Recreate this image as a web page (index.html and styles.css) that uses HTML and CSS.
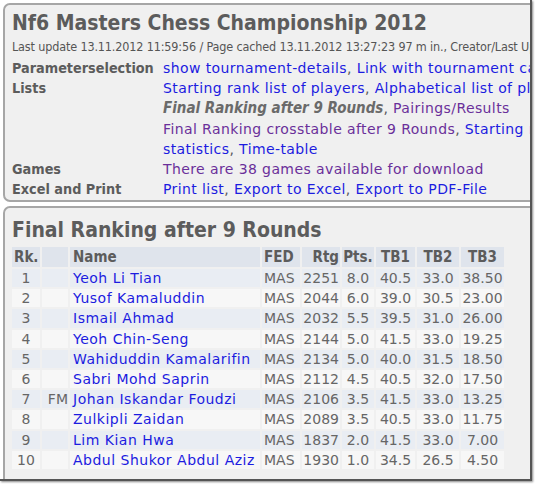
FILE: index.html
```html
<!DOCTYPE html>
<html>
<head>
<meta charset="utf-8">
<link rel="stylesheet" href="styles.css">
</head>
<body>
<div class="frame">
  <div class="panel panel-top">
    <h1 class="title">Nf6 Masters Chess Championship 2012</h1>
    <div class="update">Last update 13.11.2012 11:59:56 / Page cached 13.11.2012 13:27:23 97 m in., Creator/Last Upload: Malaysian Chess Federation</div>
    <div class="info">
      <div class="label">Parameterselection</div>
      <div class="links"><a class="lk">show tournament-details</a>, <a class="lk">Link with tournament calendar</a></div>
      <div class="label">Lists</div>
      <div class="links">
        <div class="line"><a class="lk">Starting rank list of players</a>, <a class="lk">Alphabetical list of players</a>, <a class="lk">Federation-, Game- and Title-statistics</a></div>
        <div class="line"><span class="cur">Final Ranking after 9 Rounds</span>, <a class="vis">Pairings/Results</a></div>
        <div class="line"><a class="vis">Final Ranking crosstable after 9 Rounds</a>, <a class="lk">Starting rank crosstable</a>, <a class="lk">Player</a></div>
        <div class="line"><a class="lk">statistics</a>, <a class="lk">Time-table</a></div>
      </div>
      <div class="label">Games</div>
      <div class="links"><a class="vis">There are 38 games available for download</a></div>
      <div class="label">Excel and Print</div>
      <div class="links"><a class="lk">Print list</a>, <a class="lk">Export to Excel</a>, <a class="lk">Export to PDF-File</a></div>
    </div>
  </div>
  <div class="panel panel-bottom">
    <h2 class="title">Final Ranking after 9 Rounds</h2>
    <table class="rank">
      <thead>
        <tr><th class="c-rk">Rk.</th><th class="c-ti"></th><th class="c-nm">Name</th><th class="c-fed">FED</th><th class="c-rtg">Rtg</th><th class="c-pts">Pts.</th><th class="c-tb">TB1</th><th class="c-tb2">TB2</th><th class="c-tb3">TB3</th></tr>
      </thead>
      <tbody>
        <tr><td class="c-rk">1</td><td class="c-ti"></td><td class="c-nm"><a class="lk">Yeoh Li Tian</a></td><td class="c-fed">MAS</td><td class="c-rtg">2251</td><td class="c-pts">8.0</td><td class="c-tb">40.5</td><td class="c-tb2">33.0</td><td class="c-tb3">38.50</td></tr>
        <tr><td class="c-rk">2</td><td class="c-ti"></td><td class="c-nm"><a class="lk">Yusof Kamaluddin</a></td><td class="c-fed">MAS</td><td class="c-rtg">2044</td><td class="c-pts">6.0</td><td class="c-tb">39.0</td><td class="c-tb2">30.5</td><td class="c-tb3">23.00</td></tr>
        <tr><td class="c-rk">3</td><td class="c-ti"></td><td class="c-nm"><a class="lk">Ismail Ahmad</a></td><td class="c-fed">MAS</td><td class="c-rtg">2032</td><td class="c-pts">5.5</td><td class="c-tb">39.5</td><td class="c-tb2">31.0</td><td class="c-tb3">26.00</td></tr>
        <tr><td class="c-rk">4</td><td class="c-ti"></td><td class="c-nm"><a class="lk">Yeoh Chin-Seng</a></td><td class="c-fed">MAS</td><td class="c-rtg">2144</td><td class="c-pts">5.0</td><td class="c-tb">41.5</td><td class="c-tb2">33.0</td><td class="c-tb3">19.25</td></tr>
        <tr><td class="c-rk">5</td><td class="c-ti"></td><td class="c-nm"><a class="lk">Wahiduddin Kamalarifin</a></td><td class="c-fed">MAS</td><td class="c-rtg">2134</td><td class="c-pts">5.0</td><td class="c-tb">40.0</td><td class="c-tb2">31.5</td><td class="c-tb3">18.50</td></tr>
        <tr><td class="c-rk">6</td><td class="c-ti"></td><td class="c-nm"><a class="lk">Sabri Mohd Saprin</a></td><td class="c-fed">MAS</td><td class="c-rtg">2112</td><td class="c-pts">4.5</td><td class="c-tb">40.5</td><td class="c-tb2">32.0</td><td class="c-tb3">17.50</td></tr>
        <tr><td class="c-rk">7</td><td class="c-ti">FM</td><td class="c-nm"><a class="lk">Johan Iskandar Foudzi</a></td><td class="c-fed">MAS</td><td class="c-rtg">2106</td><td class="c-pts">3.5</td><td class="c-tb">41.5</td><td class="c-tb2">33.0</td><td class="c-tb3">13.25</td></tr>
        <tr><td class="c-rk">8</td><td class="c-ti"></td><td class="c-nm"><a class="lk">Zulkipli Zaidan</a></td><td class="c-fed">MAS</td><td class="c-rtg">2089</td><td class="c-pts">3.5</td><td class="c-tb">40.5</td><td class="c-tb2">33.0</td><td class="c-tb3">11.75</td></tr>
        <tr><td class="c-rk">9</td><td class="c-ti"></td><td class="c-nm"><a class="lk">Lim Kian Hwa</a></td><td class="c-fed">MAS</td><td class="c-rtg">1837</td><td class="c-pts">2.0</td><td class="c-tb">41.5</td><td class="c-tb2">33.0</td><td class="c-tb3">7.00</td></tr>
        <tr><td class="c-rk">10</td><td class="c-ti"></td><td class="c-nm"><a class="lk">Abdul Shukor Abdul Aziz</a></td><td class="c-fed">MAS</td><td class="c-rtg">1930</td><td class="c-pts">1.0</td><td class="c-tb">34.5</td><td class="c-tb2">26.5</td><td class="c-tb3">4.50</td></tr>
      </tbody>
    </table>
  </div>
</div>
</body>
</html>
```
FILE: styles.css
```css
* { box-sizing: border-box; }
html, body { margin: 0; padding: 0; background: #ffffff; }
body {
  font-family: "DejaVu Sans", sans-serif;
  color: #5a5a5a;
  width: 535px;
  height: 484px;
  overflow: hidden;
}
.frame {
  width: 532px;
  height: 481px;
  overflow: hidden;
  border-right: 2px solid #555555;
  border-bottom: 2px solid #555555;
  box-shadow: 1px 1px 2px #888888;
  padding: 3px 0 0 3px;
  display: flex;
  flex-direction: column;
  gap: 4px;
}
.panel {
  background: #f0f0f0;
  border: 2px solid #a6a6a6;
  border-radius: 7px;
  width: 560px;
  flex: none;
  overflow: hidden;
  padding: 0 0 0 7px;
}
.panel-top { height: 199px; padding-top: 6px; }
.panel-bottom { height: 300px; padding-top: 10px; }
.title {
  margin: 0;
  font-family: "DejaVu Sans Condensed", "DejaVu Sans", sans-serif;
  font-size: 21px;
  font-weight: bold;
  line-height: 24px;
  color: #5c5c5c;
  white-space: nowrap;
}
.update {
  font-family: "DejaVu Sans Condensed", "DejaVu Sans", sans-serif;
  font-size: 12.5px;
  letter-spacing: -0.15px;
  line-height: 14px;
  margin-top: 5px;
  white-space: nowrap;
  color: #555;
}
.info {
  display: grid;
  grid-template-columns: 151px auto;
  font-size: 14px;
  letter-spacing: 0.4px;
  line-height: 20.17px;
  margin-top: 4px;
  white-space: nowrap;
}
.label {
  font-family: "DejaVu Sans Condensed", "DejaVu Sans", sans-serif;
  font-size: 14.3px;
  letter-spacing: 0;
  font-weight: bold;
  color: #5c5c5c;
}
.links { color: #5a5a5a; }
.lk { color: #1c1ce0; text-decoration: none; }
.vis { color: #6a2f9a; text-decoration: none; }
.cur {
  font-family: "DejaVu Sans Condensed", "DejaVu Sans", sans-serif;
  font-size: 15px;
  letter-spacing: 0;
  font-style: italic;
  font-weight: bold;
  color: #6a6a6a;
}
.rank {
  border-collapse: separate;
  border-spacing: 2px;
  margin: 3px 0 0 -2px;
  font-size: 14px;
  white-space: nowrap;
  table-layout: fixed;
}
.rank th, .rank td {
  height: 18.2px;
  padding: 0;
  line-height: 18px;
  overflow: visible;
}
.rank th {
  height: 20px;
  background: #dfe4ec;
  font-family: "DejaVu Sans Condensed", "DejaVu Sans", sans-serif;
  font-size: 15px;
  font-weight: bold;
  color: #5c5c5c;
}
.rank tbody tr:nth-child(odd) td { background: #e9edf3; }
.rank tbody tr:nth-child(even) td { background: #f7f7f7; }
.rank td { color: #666666; }
.rank td.c-nm { letter-spacing: 0.5px; padding-left: 3px; }
.rank th.c-nm { padding-left: 3px; }
.rank th.c-rk { padding-left: 2px; }
.rank .c-fed { padding-left: 2px; }
.rank .c-rtg { padding-right: 1px; }
.c-rk { width: 28px; text-align: center; }
th.c-rk { text-align: left; }
.c-ti { width: 26px; text-align: right; }
.c-nm { width: 190px; text-align: left; }
.c-fed { width: 38px; text-align: left; }
.c-rtg { width: 38px; text-align: right; }
.c-pts { width: 32px; text-align: center; }
.c-tb { width: 39px; text-align: center; }
.c-tb2 { width: 42px; text-align: center; }
.c-tb3 { width: 43px; text-align: center; }
```
